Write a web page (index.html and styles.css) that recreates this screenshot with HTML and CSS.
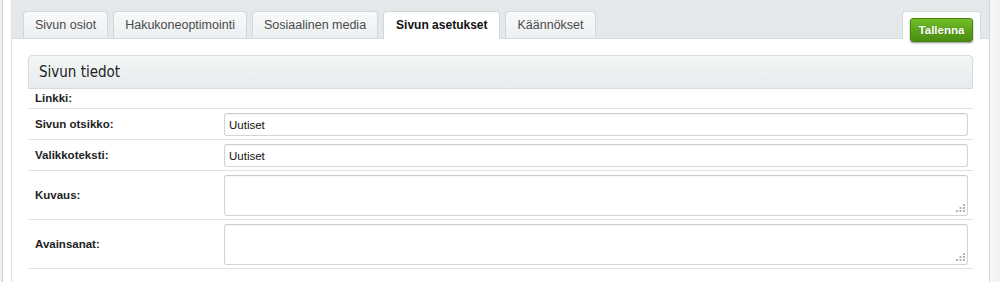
FILE: index.html
```html
<!DOCTYPE html>
<html lang="fi">
<head>
<meta charset="utf-8">
<title>Sivun asetukset</title>
<link rel="stylesheet" href="styles.css">
</head>
<body>
<div class="gutter-left"></div>
<div class="main">
  <div class="panel">
    <div class="tabbar">
      <ul class="tabs">
        <li class="tab">Sivun osiot</li>
        <li class="tab">Hakukoneoptimointi</li>
        <li class="tab">Sosiaalinen media</li>
        <li class="tab active">Sivun asetukset</li>
        <li class="tab">Käännökset</li>
      </ul>
      <div class="save-tab"><button class="btn-save" type="button">Tallenna</button></div>
    </div>
    <div class="panel-body">
      <div class="section">
        <h2 class="section-title">Sivun tiedot</h2>
        <div class="row row-link"><span class="label">Linkki:</span></div>
        <div class="row"><label class="label">Sivun otsikko:</label><input class="field" type="text" value="Uutiset"></div>
        <div class="row"><label class="label">Valikkoteksti:</label><input class="field" type="text" value="Uutiset"></div>
        <div class="row"><label class="label">Kuvaus:</label>
          <div class="area-wrap"><textarea class="area"></textarea>
            <svg class="grip" width="9" height="9" viewBox="0 0 9 9"><rect x="7" y="0" width="2" height="2"/><rect x="3.5" y="3" width="2" height="2"/><rect x="7" y="3" width="2" height="2"/><rect x="0" y="6" width="2" height="2"/><rect x="3.5" y="6" width="2" height="2"/><rect x="7" y="6" width="2" height="2"/></svg>
          </div>
        </div>
        <div class="row"><label class="label">Avainsanat:</label>
          <div class="area-wrap"><textarea class="area"></textarea>
            <svg class="grip" width="9" height="9" viewBox="0 0 9 9"><rect x="7" y="0" width="2" height="2"/><rect x="3.5" y="3" width="2" height="2"/><rect x="7" y="3" width="2" height="2"/><rect x="0" y="6" width="2" height="2"/><rect x="3.5" y="6" width="2" height="2"/><rect x="7" y="6" width="2" height="2"/></svg>
          </div>
        </div>
      </div>
    </div>
  </div>
</div>
<div class="gutter-right"></div>
</body>
</html>
```
FILE: styles.css
```css
* { box-sizing: border-box; }
html, body { margin: 0; padding: 0; }
body {
  display: flex;
  height: 282px;
  overflow: hidden;
  background: #fff;
  font-family: "Liberation Sans", Arial, sans-serif;
  color: #222;
}
.gutter-left {
  width: 3px;
  background: #f0f0f0;
  border-right: 1px solid #cdcdcd;
}
.main {
  flex: 1;
  padding-left: 8px;
  background: #fff;
}
.gutter-right {
  width: 10px;
  background: linear-gradient(to right, #f7f7f7, #f1f1f1);
}
.panel {
  height: 100%;
  border-left: 1px solid #dce1e4;
  border-right: 1px solid #d3d8db;
  background: #fff;
}
.tabbar {
  height: 39px;
  background: #e4e8eb;
  border-bottom: 1px solid #d6dbde;
  display: flex;
  align-items: flex-end;
  justify-content: space-between;
  padding: 0 8px 0 11px;
}
.tabs {
  list-style: none;
  margin: 0 0 -1px 0;
  padding: 0;
  display: flex;
  gap: 5px;
}
.tab {
  height: 27px;
  line-height: 26px;
  padding: 0 11px;
  font-size: 12.5px;
  color: #4a4a4a;
  background: linear-gradient(#f9fafa, #eceff1);
  border: 1px solid #d2d7da;
  border-bottom: none;
  border-radius: 4px 4px 0 0;
}
.tab.active {
  height: 28px;
  background: #fff;
  color: #111;
  font-weight: bold;
  font-size: 12px;
  padding: 0 12px;
}
.save-tab {
  height: 28px;
  margin-bottom: -1px;
  background: #fff;
  border: 1px solid #d6dbde;
  border-bottom: none;
  border-radius: 4px 4px 0 0;
  padding: 6px 7px 0 7px;
}
.btn-save {
  display: block;
  width: 63px;
  height: 24px;
  padding: 0;
  font-family: "Liberation Sans", Arial, sans-serif;
  font-size: 11.5px;
  font-weight: bold;
  color: #fff;
  text-shadow: 0 0 1px #3b6f0a;
  background: linear-gradient(#73bf2a, #5aa219 55%, #4b8c12);
  border: 1px solid #47830f;
  border-radius: 3px;
  box-shadow: 0 1px 2px rgba(0,0,0,0.45);
}
.panel-body {
  padding: 16px 16px 0 16px;
}
.section-title {
  margin: 0;
  height: 34px;
  display: flex;
  align-items: center;
  padding-left: 10px;
  font-family: "DejaVu Sans Condensed", "DejaVu Sans", sans-serif;
  font-size: 15px;
  font-weight: normal;
  color: #222;
  background: linear-gradient(#f3f5f6, #e8ebed);
  border: 1px solid #d6dbde;
  border-radius: 4px 4px 0 0;
}
.row {
  display: grid;
  grid-template-columns: 196px 1fr;
  align-items: center;
  padding: 4px 5px 3px 0;
  border-bottom: 1px solid #dde2e5;
}
.row-link {
  padding: 0;
  height: 20px;
}
.label {
  padding-left: 7px;
  font-size: 11.5px;
  font-weight: bold;
  color: #1e1e1e;
  line-height: 19px;
}
.field {
  display: block;
  width: 100%;
  height: 23px;
  padding: 0 4px;
  font-family: "Liberation Sans", Arial, sans-serif;
  font-size: 11.5px;
  color: #111;
  border: 1px solid #cfd6da;
  border-top-color: #c7ced2;
  border-radius: 3px;
  box-shadow: inset 0 1px 2px rgba(0,0,0,0.05);
  outline: none;
}
.area-wrap {
  position: relative;
  height: 41px;
}
.area {
  display: block;
  width: 100%;
  height: 41px;
  resize: none;
  padding: 3px 4px;
  font-family: "Liberation Sans", Arial, sans-serif;
  font-size: 11.5px;
  border: 1px solid #cfd6da;
  border-top-color: #c7ced2;
  border-radius: 3px;
  box-shadow: inset 0 1px 2px rgba(0,0,0,0.05);
  outline: none;
}
.grip {
  position: absolute;
  right: 3px;
  bottom: 3px;
  fill: #b3b3b3;
}
```
